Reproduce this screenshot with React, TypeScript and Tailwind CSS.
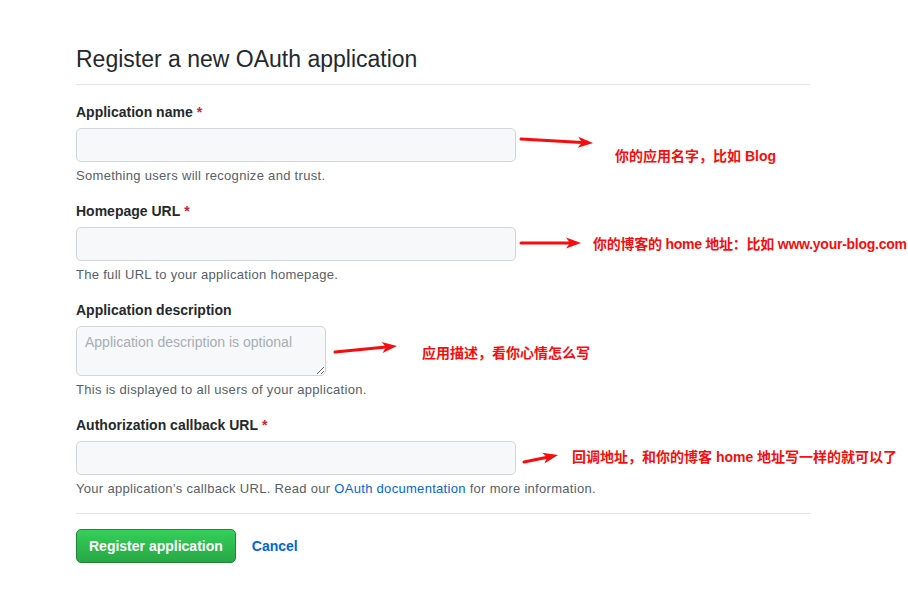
const font = { fontFamily: '"Liberation Sans", Arial, "Noto Sans CJK SC", sans-serif' }

function Arrow({ x1, y1, x2, y2 }: { x1: number; y1: number; x2: number; y2: number }) {
  const dx = x2 - x1
  const dy = y2 - y1
  const len = Math.hypot(dx, dy)
  const ux = dx / len
  const uy = dy / len
  const nx = -uy
  const ny = ux
  const head = 15
  const half = 5.5
  const notch = 4
  const bx = x2 - ux * head
  const by = y2 - uy * head
  const pts = [
    [x2, y2],
    [bx + nx * half, by + ny * half],
    [bx + ux * notch, by + uy * notch],
    [bx - nx * half, by - ny * half],
  ]
    .map((p) => p.join(','))
    .join(' ')
  return (
    <g>
      <line x1={x1} y1={y1} x2={bx + ux * notch} y2={by + uy * notch} stroke="#f70d0d" strokeWidth={3} strokeLinecap="round" />
      <polygon points={pts} fill="#f70d0d" />
    </g>
  )
}

function Label({ text, required }: { text: string; required?: boolean }) {
  return (
    <label className="block text-[14px] leading-5 font-bold text-[#24292e]">
      {text}
      {required && <span className="text-[#cb2431] ml-1">*</span>}
    </label>
  )
}

function Help({ children }: { children: React.ReactNode }) {
  return <p className="mt-[5px] text-[13px] leading-[18px] tracking-[0.3px] text-[#586069]">{children}</p>
}

function TextInput() {
  return (
    <input
      type="text"
      className="block w-[440px] h-[34px] rounded-[5px] border border-[#d1d5da] bg-[#f6f8fa] px-2 text-[14px] outline-none"
    />
  )
}

export default function App() {
  return (
    <div className="relative w-[908px] h-[590px] bg-white overflow-hidden" style={font}>
      <div className="w-[810px] pl-[76px] pt-[44px]">
        <h1 className="text-[23px] leading-[30px] font-normal text-[#24292e] pb-[10px] mb-[17px] border-b border-[#e1e4e8]">
          Register a new OAuth application
        </h1>

        <div className="flex flex-col gap-[16px]">
          <div>
            <Label text="Application name" required />
            <div className="mt-[6px]">
              <TextInput />
            </div>
            <Help>Something users will recognize and trust.</Help>
          </div>

          <div>
            <Label text="Homepage URL" required />
            <div className="mt-[6px]">
              <TextInput />
            </div>
            <Help>The full URL to your application homepage.</Help>
          </div>

          <div>
            <Label text="Application description" />
            <div className="mt-[6px]">
              <textarea
                placeholder="Application description is optional"
                className="block w-[250px] h-[50px] rounded-[5px] border border-[#d1d5da] bg-[#f6f8fa] px-2 py-[5px] text-[14px] leading-5 placeholder:text-[#a8aeb5] outline-none"
              />
            </div>
            <Help>This is displayed to all users of your application.</Help>
          </div>

          <div>
            <Label text="Authorization callback URL" required />
            <div className="mt-[6px]">
              <TextInput />
            </div>
            <Help>
              Your application’s callback URL. Read our{' '}
              <a className="text-[#0366d6]">OAuth documentation</a> for more information.
            </Help>
          </div>
        </div>

        <div className="mt-[15px] border-t border-[#e1e4e8] pt-[15px] flex items-center gap-4">
          <button className="h-[34px] px-3 rounded-[5px] border border-[#22863a] bg-gradient-to-b from-[#34d058] to-[#28a745] text-white text-[14px] font-bold">
            Register application
          </button>
          <a className="text-[#0366d6] text-[14px] font-bold">Cancel</a>
        </div>
      </div>

      {/* annotations */}
      <svg className="absolute inset-0 pointer-events-none" width={908} height={590}>
        <Arrow x1={521} y1={139} x2={593} y2={143} />
        <Arrow x1={521} y1={243} x2={581} y2={243} />
        <Arrow x1={335} y1={352} x2={397} y2={346} />
        <Arrow x1={524} y1={462} x2={558} y2={455} />
      </svg>
      <div className="absolute left-[615px] top-[146px] text-[14px] leading-5 font-bold text-[#f70d0d] whitespace-nowrap">
        你的应用名字，比如 Blog
      </div>
      <div className="absolute left-[593px] top-[234px] text-[14px] leading-5 font-bold tracking-[-0.25px] text-[#f70d0d] whitespace-nowrap">
        你的博客的 home 地址：比如 www.your-blog.com
      </div>
      <div className="absolute left-[422px] top-[343px] text-[14px] leading-5 font-bold text-[#f70d0d] whitespace-nowrap">
        应用描述，看你心情怎么写
      </div>
      <div className="absolute left-[572px] top-[447px] text-[14px] leading-5 font-bold text-[#f70d0d] whitespace-nowrap">
        回调地址，和你的博客 home 地址写一样的就可以了
      </div>
    </div>
  )
}
